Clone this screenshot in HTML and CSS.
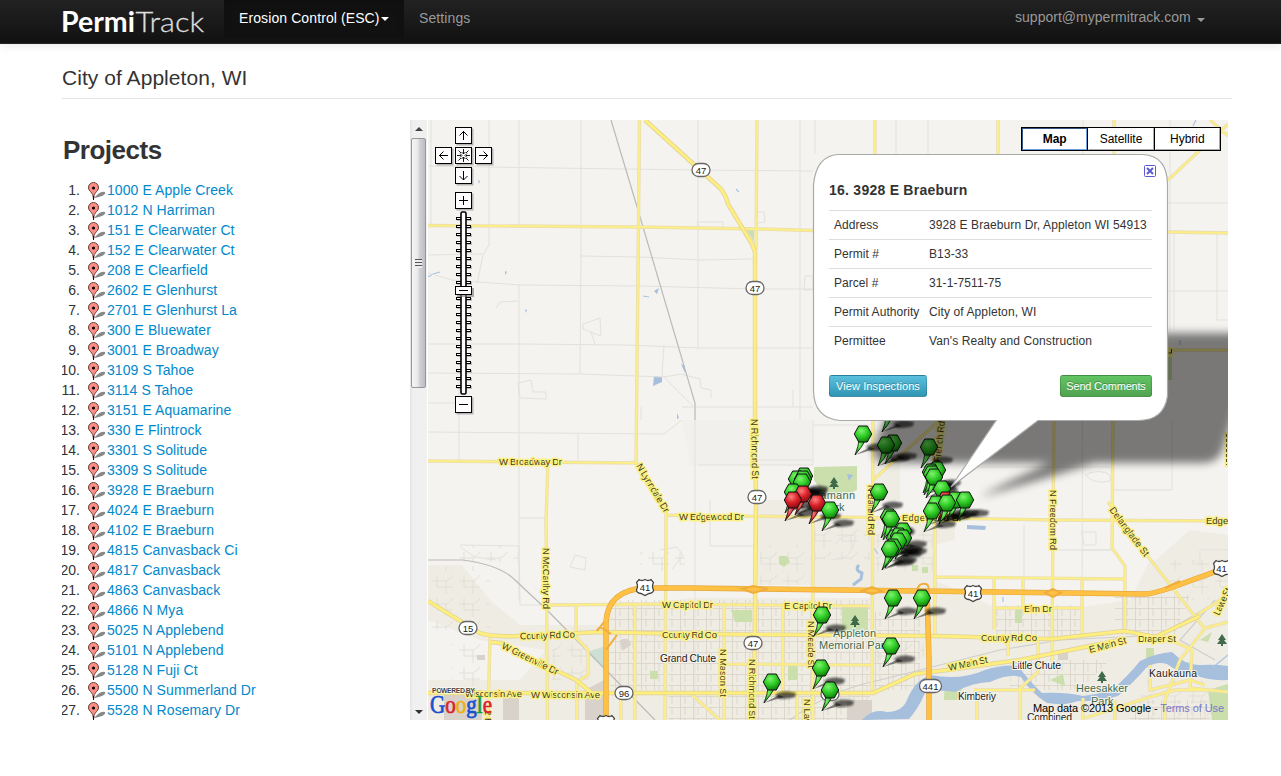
FILE: index.html
```html
<!DOCTYPE html>
<html lang="en">
<head>
<meta charset="utf-8">
<title>PermiTrack - City of Appleton, WI</title>
<link rel="stylesheet" href="styles.css">
</head>
<body>
<header class="navbar">
  <div class="container nav-inner">
    <svg class="logo" width="162" height="43" viewBox="62 0 162 43" role="img" aria-label="PermiTrack"><text class="logo-bold" x="61" y="31.500" textLength="74" lengthAdjust="spacingAndGlyphs">Permi</text><text class="logo-light" x="135.500" y="31.500" textLength="68.500" lengthAdjust="spacingAndGlyphs">Track</text></svg>
    <nav class="nav">
      <a class="nav-item active">Erosion Control (ESC)<span class="caret"></span></a>
      <a class="nav-item">Settings</a>
    </nav>
    <a class="account">support@mypermitrack.com<span class="caret"></span></a>
  </div>
</header>
<main class="container">
  <h1 class="page-title">City of Appleton, WI</h1>
  <div class="workspace">
    <section class="projects">
      <h2 class="projects-title">Projects</h2>
      <ol class="project-list" id="projects"></ol>
    </section>
    <div class="scrollbar"><i class="arrow up"></i><div class="thumb"><i class="grip"></i></div><i class="arrow down"></i></div>
    <section class="map">
      <svg class="map-canvas" width="800" height="600" viewBox="428 120 800 600">
        <defs>
          <radialGradient id="gGreen" cx=".4" cy=".3" r=".75"><stop offset="0" stop-color="#7df56c"/><stop offset=".5" stop-color="#2fcb26"/><stop offset="1" stop-color="#0b7a08"/></radialGradient>
          <radialGradient id="gRed" cx=".4" cy=".3" r=".75"><stop offset="0" stop-color="#ff8080"/><stop offset=".5" stop-color="#d81f27"/><stop offset="1" stop-color="#850a10"/></radialGradient>
          <filter id="soft" x="-20%" y="-20%" width="140%" height="140%"><feGaussianBlur stdDeviation="4"/></filter>
          <filter id="soft1" x="-30%" y="-60%" width="160%" height="220%"><feGaussianBlur stdDeviation=".8"/></filter>
          <pattern id="streets" width="13" height="11" patternUnits="userSpaceOnUse"><path d="M0 3.500H13M4.500 0V11M9 3V11" stroke="#d9d2c6" stroke-width=".8" fill="none"/></pattern>
          <pattern id="streets2" width="27" height="23" patternUnits="userSpaceOnUse"><path d="M0 6H14V19M5 0V12H21M14 6Q20 3 21 0" stroke="#dedad2" stroke-width=".8" fill="none"/></pattern>
          <g id="pinShape"><path d="M-4 6 Q-4.500 12-8 21 Q-1 13 2.500 6Z" stroke="#111" stroke-width=".8"/><path d="M-4.300-8H4.300L8.700 0 4.300 8H-4.300L-8.700 0Z" stroke="#111" stroke-width="1" stroke-linejoin="round"/></g>
          <g id="pinShade"><path d="M-8 21L7 13 12 15Z" fill="#000" opacity=".45"/><path d="M3 13Q7 9 16 9.500L24 11 23 15Q17 17 7 17Z" fill="#000" opacity=".6" filter="url(#soft1)"/></g>
          <g id="green"><use href="#pinShade"/><use href="#pinShape" fill="url(#gGreen)"/></g>
          <g id="red"><use href="#pinShade"/><use href="#pinShape" fill="url(#gRed)"/></g>
          <g id="tree"><path d="M0-6L4 0H2L5 4H1V6H-1V4H-5L-2 0H-4Z" fill="#3f6b4b"/></g>
          <g id="oval"><rect x="-9" y="-6.500" width="18" height="13" rx="6.500" fill="#fff" stroke="#666" stroke-width="1.300"/></g>
          <g id="us"><path d="M-6-7.500Q-3-5.500 0-7.500 3-5.500 6-7.500L8.500-4.500Q6.500-1 8.500 3 8.500 6 4 6.500L0 8.500-4 6.500Q-8.500 6-8.500 3-6.500-1-8.500-4.500Z" fill="#fff" stroke="#444" stroke-width="1.300"/></g>
          <g id="button"><rect x="1.500" y="1.500" width="17" height="17" fill="#777" opacity=".5"/><rect x=".5" y=".5" width="16" height="16" fill="#fff" stroke="#000"/></g>
          <path id="roads" d="M428 225.500L640 227 760 229 813 230.500M1168 232L1228 233M428 461L637 463M639.500 120L637.500 320 636 462 665 508 666 515 665 720M757 120L756 250M875 120V154M998 120V154M1114 120V154M1168 180L1228 124M1210 120L1228 136M873 420L872 694M872 481L940 420M1168 350H1228M548 463L546 520 547.500 720M665 515L812 517 935 518 1055 520 1228 521M813 517V720M935 500V636M1054 420L1052 640M1113 420L1112 548 1125 566V632M1108 502L1143 550 1204 628M548 605L665 604 870 606M935 577L1125 579M994 578V630M1023 579V608M1082 580V638M994 608H1083M576 606V637L588 650V675L577 682V720M490 637L488 720M635 604V720M621 693V720M724 605V720M783 606V692M797 692V720M724 664L872 665M690 693L720 720M1052 640V665M1008 638V656M1038 638V672L1018 690M974 690H1035M977 690V720M1020 690V720M1083 720V698M1115 700V720M1150 665V690L1190 680 1205 685M1085 718L1150 697 1175 690 1210 690M1160 635 1192 650M1180 626 1228 595M1205 628 1228 622M1206 627L1180 660 1165 700V720M1192 650L1190 688 1228 692"/>
          <path id="major" d="M645 120L700 170 720 188Q726 195 728 204L752 244 755 252V410L756 500 754 720M428 601L480 633Q490 637 520 636L600 632 690 634 935 636 1052 639 1125 631 1155 637 1200 616M490 642L500 643 576 680 592 693M428 693L690 693 873 693 915 674 955 669 1020 660 1120 640"/>
          <path id="highway" d="M606 720V622Q608 590 645 588H690L1145 594Q1152 594 1170 588L1228 567M927 592L929 660V720"/>
        </defs>
        <rect x="428" y="120" width="800" height="600" fill="#f4f3f0"/>
        <!-- built-up areas -->
        <g fill="#efece4">
          <path d="M428 565H462L490 600 520 625H600L620 602H660L690 598H870V520H935V580L1000 610H1060L1130 600 1150 560 1190 565 1228 550V720H428V680H520L545 650 480 640 428 620Z"/>
          <path d="M682 420H812V466H690Z" opacity=".3"/><path d="M758 500H812V585H758ZM812 520H872V590H812ZM873 430H900V500H873Z"/>
          <path d="M873 516H955V540L935 545V585H873Z"/><path d="M1150 565L1190 530 1228 535V590H1180Z"/>
        </g>
        <g fill="url(#streets)">
          <path d="M668 600H870V720H668ZM610 600H664V690H610Z"/><path d="M996 605H1080V636H996ZM1010 660H1110L1080 690H1010ZM1115 595H1190L1175 635H1115Z"/><path d="M873 612H920V690H873ZM1130 700H1210V720H1130Z"/>
        </g>
        <g fill="url(#streets2)">
          <path d="M430 566H490V630H430ZM452 640H486V690H452ZM760 545H812V585H760ZM875 520H935V575H875ZM460 545H518V562H460ZM640 548H685V575H640ZM875 640H925V665H875ZM1170 560H1228V600H1170ZM1140 680H1228V720H1140ZM815 520H870V560H815ZM552 640H590V680H552Z"/>
        </g>
        <g fill="#d9d2ca"><path d="M444 690H482V720H444ZM503 697H519V720H503ZM585 690L604 680V720H585ZM620 640Q630 636 631 645L622 651ZM477 655H485V660H477ZM847 700H872V720H847ZM1058 650H1068V660H1058Z"/></g>
        <!-- parks -->
        <g fill="#cbdfac">
          <path d="M814 467L857 466V490L840 497H825L814 480Z"/><path d="M842 606H868V632H842ZM731 610H752V622H735ZM779 556L787 556 790 562 784 567 779 564ZM650 671H658V679H650ZM746 229L754 230 754 242Z"/><path d="M788 665H797V680H788ZM1015 609H1022V623H1015ZM1168 350H1172V380H1168ZM912 565H918V571H912ZM922 567H928V573H922ZM1200 640L1212 632 1208 642Z"/>
          <path d="M945 679Q958 675 964 685L957 700H944ZM1050 680L1063 674 1065 686ZM1146 648H1154V658H1146ZM1208 690L1228 684V720H1212ZM1172 664L1190 662 1184 672Z"/>
        </g>
        <path d="M587 652L605 646V670Z" fill="#cedfd5"/>
        <!-- water -->
        <g fill="#a5bfdd">
          <path d="M862 720Q872 708 887 712 902 712 907 700 915 680 930 675 960 681 985 670 1003 664 1018 666 1030 682 1042 693 1065 692 1083 696 1098 694 1112 690 1128 676 1140 661 1156 653 1172 652 1186 666 1200 665 1215 664 1228 666V680Q1208 681 1195 675 1180 674 1167 664 1156 661 1146 668 1135 681 1118 696 1098 702 1078 701 1065 706 1047 703 1032 694 1021 677 1010 673 990 682 974 682 955 692 938 689 925 693 918 709 909 719 890 722Z"/>
          <path d="M967 525L986 526 985 530 967 529ZM654 376L662 377 662 382 653 386ZM654 291L659 288 657 294ZM681 364L685 366 685 373ZM677 413L679 418 677 419ZM847 474L853 475 849 481ZM505 271L507 272 505 275ZM525 309L527 310 526 313ZM478 180L480 181 479 184Z"/>
        </g>
        <path d="M859 565Q854 570 862 573L861 579 853 585" fill="none" stroke="#a5bfdd" stroke-width="3"/>
        <path d="M428 277L433 274 440 272M643 296L649 297M874 548L878 554M1003 597V602M736 189L739 192M1196 120L1193 126M1180 340L1180 345M1212 668L1228 655" fill="none" stroke="#a9c3e6" stroke-width="1.200"/>
        <!-- minor roads -->
        <g fill="none" stroke="#e2e1dc" stroke-width="1">
          <path d="M431 120V225M489 120V245L483 255 477 284M519 120V225M581 120V255L580 374M698 120V350M815 120V154M428 166L552 168 698 170 813 171M428 255L482 254M580 256L640 257 700 260 753 259M428 273L452 280 520 285 640 286 755 289H813M428 344L520 344 625 345 700 348H813M428 373L580 374 664 377 681 374 700 379 701 388 711 390V398M519 284V430M459 382V460M428 403H460M428 432L664 434 682 420M519 430V600M460 545L519 546 520 605H548M578 433V460M519 518H546M664 345L662 375 693 406M682 407H813M793 390V407M695 420V720M710 500V546H755M698 465H813V420M800 120V420M1083 120L1082 640M1170 120V330M1168 232H1228M1168 291H1228M1174 235V330M1217 235V320H1228M896 120V154M928 120V154M1168 203H1228M970 467H1112M1112 490H1172V420M1053 550H1112M1024 525V578M1082 550H1110M1200 550H1228M1200 550V565M700 230L697 222H723V228M757 212H764L765 222 757 223M583 324L600 318 601 336 583 329ZM591 332 595 344M518 383 531 380 533 392 546 392V399L520 398ZM496 308 500 302 518 301M641 420V407M805 276H813V290H804Z"/>
          <path d="M812 500V590M757 460H812M813 425 870 425M830 560Q855 560 855 535 840 535 835 545M1085 475Q1100 468 1110 475V481Q1095 485 1085 475M1082 532H1096V545H1084ZM460 547L475 557 496 560M575 555 586 558 585 570 570 567ZM660 550 677 547 683 555 672 569"/>
        </g>
        <g fill="none" stroke="#babab9" stroke-width="1.200"><path d="M611 120L638 210 695 403V420M428 560H463Q500 565 515 580L547 610 655 720"/><path d="M790 720Q830 690 880 680 940 665 1000 650L1060 640 1160 635 1220 600M1215 600 1180 640 1215 660" stroke="#cfcecb"/></g>
        <!-- roads -->
        <g fill="none">
          <use href="#roads" stroke="#e9dcb4" stroke-width="3.400"/><use href="#roads" stroke="#fbee86" stroke-width="2"/>
          <use href="#major" stroke="#dfd09a" stroke-width="4.400"/><use href="#major" stroke="#fdee7d" stroke-width="3"/>
          <use href="#highway" stroke="#e5a640" stroke-width="5.500"/><use href="#highway" stroke="#ffc143" stroke-width="4.200"/>
          <path d="M742 589L753 586 768 589 753 593ZM862 591L872 587 882 591 872 594ZM1045 593L1053 589 1061 593 1053 597ZM1165 588L1180 581M917 592Q918 582 926 584 930 585 928 595M604 622L597 631Q599 625 605 630L611 634M606 650 617 635" stroke="#efae3b" stroke-width="2"/>
        </g>
        <!-- road names -->
        <g class="road">
          <text x="499" y="465" textLength="63">W Broadway Dr</text>
          <text x="679" y="519.500" textLength="65">W Edgewood Dr</text>
          <text x="902" y="521" textLength="60">Edgewood Dr</text>
          <text x="1206" y="524">Edgew</text>
          <text x="662" y="608" textLength="51">W Capitol Dr</text>
          <text x="784" y="609" textLength="48">E Capitol Dr</text>
          <text x="520" y="639.500" textLength="55" transform="rotate(-2 520 639)">County Rd Oo</text>
          <text x="662" y="638" textLength="55">County Rd Oo</text>
          <text x="981" y="641" textLength="56">County Rd Oo</text>
          <text x="465" y="697" textLength="57">Wisconsin Ave</text>
          <text x="531" y="698" textLength="69">W Wisconsin Ave</text>
          <text x="1024" y="612" textLength="28">Elm Dr</text>
          <text x="1138" y="642" textLength="38">Draper St</text>
          <text x="1090" y="653" textLength="38" transform="rotate(-15 1090 653)">E Main St</text>
          <text x="949" y="671" textLength="40" transform="rotate(-12 949 671)">W Main St</text>
          <text x="501" y="648" textLength="62" transform="rotate(26 501 648)">W Greenville Dr</text>
          <text x="636" y="466" textLength="55" transform="rotate(59 636 466)">N Lynndale Dr</text>
          <text x="543" y="548" textLength="61" transform="rotate(90 543 548)">N McCarthy Rd</text>
          <text x="751" y="419" textLength="60" transform="rotate(89 751 419)">N Richmond St</text>
          <text x="868" y="485" textLength="50" transform="rotate(90 868 485)">N Ballard Rd</text>
          <text x="940" y="462" textLength="41" transform="rotate(-83 940 462)">French Rd</text>
          <text x="1050" y="490" textLength="60" transform="rotate(90 1050 490)">N Freedom Rd</text>
          <text x="1109" y="510" textLength="59" transform="rotate(53 1109 510)">Delanglade St</text>
          <text x="1219" y="616" textLength="29" transform="rotate(-65 1219 616)">Lawe St</text>
          <text x="720" y="649" textLength="48" transform="rotate(90 720 649)">N Mason St</text>
          <text x="749" y="659" textLength="60" transform="rotate(90 749 659)">N Richmond St</text>
          <text x="808" y="621" textLength="47" transform="rotate(90 808 621)">N Meade St</text>
          <text x="804" y="699" transform="rotate(90 804 699)">N Law</text>
          <text x="485" y="710" transform="rotate(90 485 710)">2 R</text>
        </g>
        <path d="M1227 432V467" stroke="#fbf084" stroke-width="5"/><path d="M1226.500 434V465" stroke="#554d20" stroke-dasharray="3 2"/>
        <path d="M1170 347V357" stroke="#fbf084" stroke-width="6"/><path d="M1168.500 353H1171.500V349" fill="none" stroke="#3f3a22"/>
        <g class="place"><text x="660" y="662" textLength="56">Grand Chute</text><text x="1012" y="669" textLength="49">Little Chute</text><text x="1149" y="677" textLength="48">Kaukauna</text><text x="958" y="700" textLength="38">Kimberly</text><text x="1027" y="721" textLength="45">Combined</text></g>
        <g class="park"><use href="#tree" x="834" y="483"/><use href="#tree" x="855" y="621"/><use href="#tree" x="1102" y="677"/><use href="#tree" x="1222" y="640"/><text x="810" y="499" textLength="45">Plamann</text><text x="822" y="511">Park</text><text x="833" y="637" textLength="43">Appleton</text><text x="819" y="649" textLength="71">Memorial Park</text><text x="1076" y="692" textLength="52">Heesakker</text><text x="1091" y="705">Park</text></g>
        <g class="shield"><use href="#oval" x="701" y="170"/><text x="701" y="173.500">47</text><use href="#oval" x="755" y="288"/><text x="755" y="291.500">47</text><use href="#oval" x="757" y="497"/><text x="757" y="500.500">47</text><use href="#oval" x="753" y="643"/><text x="753" y="646.500">47</text><use href="#oval" x="468" y="628"/><text x="468" y="631.500">15</text><use href="#oval" x="624" y="693"/><text x="624" y="696.500">96</text><use href="#oval" x="830" y="694"/><rect x="919.500" y="679.500" width="22" height="13" rx="6.500" fill="#fff" stroke="#666" stroke-width="1.300"/><text x="930.500" y="689.500">441</text><use href="#us" x="645" y="587"/><text x="645" y="590.500">41</text><use href="#us" x="973" y="593"/><text x="973" y="596.500">41</text><use href="#us" x="1222" y="568"/><text x="1221.500" y="571.500">41</text><use href="#us" x="606" y="723"/></g>
        <!-- pins -->
        <g id="pins"></g>
        <!-- info window -->
        <path d="M940 333H1262L1222 452Q1216 463 1204 463H1095Q1050 477 980 497 1010 480 1050 463H895Q868 463 875 445L900 380Z" fill="#000" opacity=".5" filter="url(#soft)"/>
        <path d="M838 154.500H1143Q1167.500 156 1167.500 185V396Q1164 420.500 1138 420.500H1038L951 487 996 420.500H840Q814 418 813.500 391V185Q816 156 838 154.500Z" fill="#fff" stroke="#aaa" stroke-width="1.200"/>
        <g transform="translate(1144 165)" fill="none" stroke="#5b5bd0"><rect x=".5" y=".5" width="11" height="11" rx="1"/><path d="M3 3L9 9M9 3L3 9" stroke-width="2"/></g>
        <!-- pan and zoom controls -->
        <g><use href="#button" x="455" y="127"/><use href="#button" x="435" y="147"/><use href="#button" x="455" y="147"/><use href="#button" x="475" y="147"/><use href="#button" x="455" y="167"/><use href="#button" x="455" y="192"/><use href="#button" x="455" y="396"/>
          <g fill="none" stroke="#000"><path d="M463.500 140V131M459.500 135.500L463.500 131.500 467.500 135.500M463.500 171V180M459.500 176L463.500 180 467.500 176M448 155.500H439M443.500 151.500L439.500 155.500 443.500 159.500M479 155.500H488M483.500 151.500L487.500 155.500 483.500 159.500M459 200.500H468M463.500 196V205M459 404.500H468"/><path d="M463.500 149V154M461.500 152L463.500 154 465.500 152M463.500 162V157M461.500 159L463.500 157 465.500 159M457 155.500H461M460 153.500L462 155.500 460 157.500M470 155.500H466M467 153.500L465 155.500 467 157.500M458.500 150.500L461 153M468.500 150.500L466 153M458.500 160.500L461 158M468.500 160.500L466 158" stroke-width=".9"/></g>
          <path d="M464.500 218V391" stroke="#888" stroke-width="15" stroke-dasharray="3 5" opacity=".5"/><path d="M463.500 217V390" stroke="#000" stroke-width="15" stroke-dasharray="3 5"/><path d="M463.500 218V390" stroke="#fff" stroke-width="13" stroke-dasharray="1 7"/>
          <rect x="461" y="212" width="5" height="182" rx="1.500" fill="#fff" stroke="#000" stroke-width="1.600"/>
          <rect x="457" y="288" width="17" height="9" fill="#777" opacity=".6"/><rect x="455.500" y="286.500" width="16" height="8" fill="#fff" stroke="#000"/><path d="M459 290.500H468" stroke="#000"/>
        </g>
        <text class="powered" x="432" y="693" textLength="43">POWERED BY</text>
        <text class="google" x="430" y="713" textLength="62" lengthAdjust="spacingAndGlyphs"><tspan class="g-blue">G</tspan><tspan class="g-red">o</tspan><tspan class="g-yellow">o</tspan><tspan class="g-blue">g</tspan><tspan class="g-green">l</tspan><tspan class="g-red">e</tspan></text>
        <text class="credit" x="1033" y="712" textLength="191" xml:space="preserve">Map data ©2013 Google - <tspan class="terms">Terms of Use</tspan></text>
      </svg>
      <div class="map-types"><button class="selected">Map</button><button>Satellite</button><button>Hybrid</button></div>
      <div class="info">
        <h3 class="info-title">16. 3928 E Braeburn</h3>
        <dl class="details">
          <div><dt>Address</dt><dd>3928 E Braeburn Dr, Appleton WI 54913</dd></div>
          <div><dt>Permit #</dt><dd>B13-33</dd></div>
          <div><dt>Parcel #</dt><dd>31-1-7511-75</dd></div>
          <div><dt>Permit Authority</dt><dd>City of Appleton, WI</dd></div>
          <div><dt>Permittee</dt><dd>Van's Realty and Construction</dd></div>
        </dl>
        <div class="actions"><button class="btn info-btn">View Inspections</button><button class="btn success-btn">Send Comments</button></div>
      </div>
    </section>
  </div>
</main>
<script src="app.js"></script>
</body>
</html>
```
FILE: styles.css
```css
* { box-sizing: border-box; }
body { margin: 0; background: #fff; color: #333; font: 14px/20px "Liberation Sans", Arial, sans-serif; overflow: hidden; }
.container { width: 1170px; margin-left: 62px; }
.navbar { height: 44px; background: linear-gradient(#222, #111); border-bottom: 1px solid #252525; box-shadow: 0 1px 10px rgba(0,0,0,.1); }
.nav-inner { display: flex; height: 43px; }
.logo { display: block; }
.logo-bold, .logo-light { font: 700 28px Lato, sans-serif; fill: #fff; }
.logo-light { font-weight: 300; fill: #ddd; stroke: #ddd; stroke-width: .3px; }
.nav { display: flex; flex: 1; }
.nav-item { padding: 8px 15px; height: 38px; color: #999; letter-spacing: .1px; white-space: nowrap; }
.nav-item.active { width: 180px; color: #fff; background: #111; box-shadow: inset 0 3px 8px rgba(0,0,0,.125); }
.account { width: 217px; padding-top: 7px; color: #999; letter-spacing: .02px; }
.caret { display: inline-block; border: 4px solid transparent; border-top-color: currentColor; border-bottom: 0; vertical-align: middle; margin-left: 1px; }
.account .caret { margin: 3px 0 0 6px; }
.page-title { margin: 14px 0 21px; height: 41px; border-bottom: 1px solid #e5e5e5; font-size: 21px; line-height: 40px; font-weight: 400; letter-spacing: .05px; }
.workspace { display: flex; height: 600px; }
.projects { width: 348px; overflow: hidden; }
.projects-title { margin: 10px 0 0 1px; font-size: 26px; line-height: 40px; letter-spacing: -.5px; }
.project-list { list-style: none; margin: 10px 0 0; padding: 0; }
.project-list li { display: flex; height: 20px; }
.number { width: 18px; display: flex; justify-content: flex-end; }
.marker { width: 20px; height: 20px; margin: 1px -1px 0 8px; }
.project-list a { color: #08c; letter-spacing: .08px; white-space: nowrap; }
.scrollbar { width: 17px; height: 600px; background: linear-gradient(90deg, #e3e3e3, #f0f0f0 3px); display: flex; flex-direction: column; align-items: center; }
.thumb { width: 15px; height: 250px; border: 1px solid #979797; border-radius: 2px; background: linear-gradient(90deg, #f5f5f5, #e9e9eb 45%, #d3d4d8 55%, #bcbdc2); display: flex; align-items: center; justify-content: center; }
.grip { width: 7px; height: 9px; background: repeating-linear-gradient(#555 0 1px, #eee 1px 3px); }
.arrow { border: 4px solid transparent; }
.arrow.up { border-bottom: 4px solid #444; border-top: 0; margin: 7px 0; }
.arrow.down { border-top: 4px solid #333; border-bottom: 0; margin: auto 0 6px; }
.map { position: relative; width: 800px; height: 600px; margin-left: 1px; flex: none; overflow: hidden; }
.map-canvas { display: block; }
.road { font: 9.5px "Liberation Sans", sans-serif; fill: #3f3a22; stroke: #fbf084; stroke-width: 3px; stroke-linejoin: round; paint-order: stroke; }
.place, .park { font: 10.5px "Liberation Sans", sans-serif; fill: #222; stroke: #f5f3ee; stroke-width: 2px; paint-order: stroke; }
.park text { fill: #3f6b4b; font-size: 11px; }
.park use { stroke: none; }
.shield { font: 9.5px "Liberation Sans", sans-serif; fill: #222; text-anchor: middle; }
.powered { font: 700 7px "Liberation Sans", sans-serif; fill: #444; stroke: #fff; stroke-width: 1px; paint-order: stroke; }
.google { font: 25px "Liberation Serif", serif; stroke-width: .7px; }
.g-blue { fill: #1850cf; stroke: #1850cf; }
.g-red { fill: #d8232a; stroke: #d8232a; }
.g-yellow { fill: #edb111; stroke: #edb111; }
.g-green { fill: #199b36; stroke: #199b36; }
.credit { font: 11px "Liberation Sans", sans-serif; fill: #000; }
.terms { fill: #7777cc; }
.map-types { position: absolute; left: 593px; top: 7px; width: 200px; height: 24px; display: flex; background: #000; border: 1px solid #000; }
.map-types button { flex: 1; margin: 0; padding: 0; background: #fff; border: 1px solid #fff; border-right-color: #aaa; border-bottom-color: #aaa; font: 12px/18px "Liberation Sans", sans-serif; color: #000; }
.map-types button + button { margin-left: 1px; }
.map-types .selected { font-weight: 700; border-color: #345684 #6c9ddf #6c9ddf #345684; }
.info { position: absolute; left: 401px; top: 60px; width: 323px; font-size: 12px; }
.info-title { margin: 0 0 10px; font-size: 14px; line-height: 20px; letter-spacing: .25px; }
.details { margin: 0; }
.details div { display: flex; height: 29px; padding: 4px 5px; border-top: 1px solid #ddd; white-space: nowrap; letter-spacing: .04px; }
.details dt { width: 95px; flex: none; }
.details dd { margin: 0; letter-spacing: .1px; }
.actions { display: flex; justify-content: space-between; margin-top: 20px; }
.btn { height: 22px; border-radius: 3px; border: 1px solid rgba(0,0,0,.15); border-bottom-color: rgba(0,0,0,.25); padding: 0 5px; color: #fff; font: 11px/18px "Liberation Sans", sans-serif; text-shadow: 0 -1px 0 rgba(0,0,0,.25); white-space: nowrap; }
.info-btn { width: 98px; background: linear-gradient(#5bc0de, #2f96b4); letter-spacing: .1px; }
.success-btn { width: 92px; background: linear-gradient(#62c462, #51a351); letter-spacing: -.2px; }
```
FILE: app.js
```js
const names = ["1000 E Apple Creek","1012 N Harriman","151 E Clearwater Ct","152 E Clearwater Ct","208 E Clearfield","2602 E Glenhurst","2701 E Glenhurst La","300 E Bluewater","3001 E Broadway","3109 S Tahoe","3114 S Tahoe","3151 E Aquamarine","330 E Flintrock","3301 S Solitude","3309 S Solitude","3928 E Braeburn","4024 E Braeburn","4102 E Braeburn","4815 Canvasback Ci","4817 Canvasback","4863 Canvasback","4866 N Mya","5025 N Applebend","5101 N Applebend","5128 N Fuji Ct","5500 N Summerland Dr","5528 N Rosemary Dr"];
const marker = '<svg class="marker" viewBox="0 0 20 20"><path d="M6 17L10 13Q14 10 17 11 18 13 14 15L7 17Z" fill="#888"/><path d="M5.500 18Q5.500 13 2.500 10.500A5 5 0 1 1 8.500 10.500Q5.500 13 5.500 18Z" fill="#fe8f84" stroke="#6b3b38" stroke-width="1"/><path d="M5.500 15V19" stroke="#111"/><circle cx="5.500" cy="7" r="1.500" fill="#000"/></svg>';
document.getElementById("projects").innerHTML = names.map((n, i) => `<li><span class="number">${i + 1}.</span>${marker}<a>${n}</a></li>`).join("");

// Map pins, back to front: x, y of the head, then "r" for red.
const pins = [[890,411],[863,434],[893,443],[886,445],[929,447],[937,470],[931,472],[932,474],[934,477],[804,476],[797,479],[803,479],[802,482],[793,492],[803,494,"r"],[793,500,"r"],[817,503,"r"],[830,510],[942,489],[879,492],[946,500,"r"],[955,500],[936,504],[965,500],[947,503],[932,511],[889,517],[891,519],[903,531],[895,538],[899,536],[903,538],[898,541],[893,547],[890,549],[922,598],[893,598],[822,615],[891,646],[821,668],[772,682],[830,690]];
document.getElementById("pins").innerHTML = pins.map(([x, y, c]) => `<use href="#${c ? "red" : "green"}" x="${x}" y="${y}"/>`).join("");
```
